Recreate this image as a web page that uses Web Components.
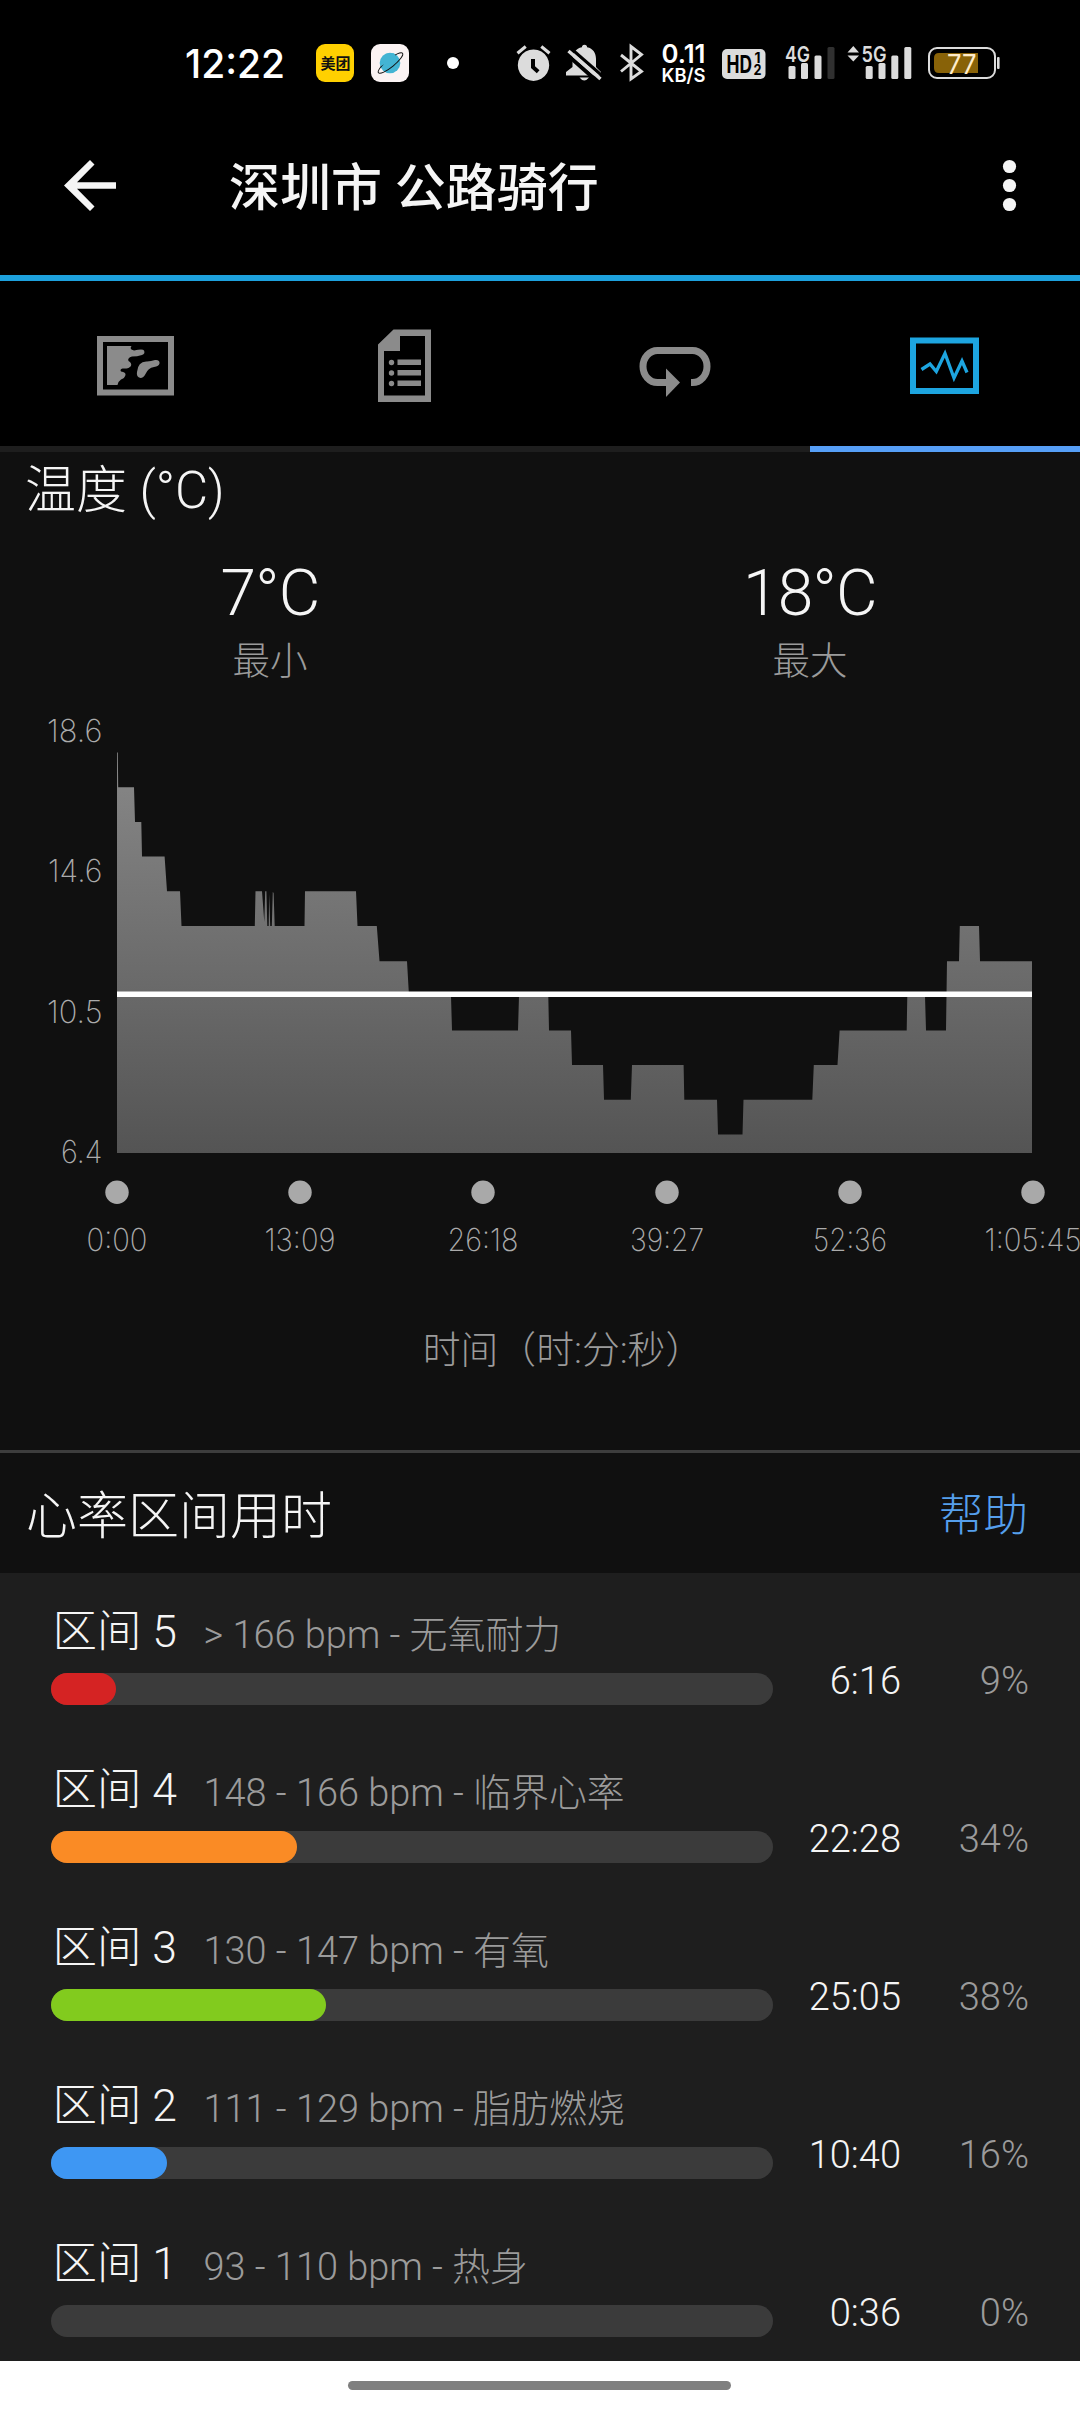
<!DOCTYPE html>
<html lang="zh-CN">
<head>
<meta charset="utf-8">
<title>深圳市 公路骑行</title>
<style>
html,body{margin:0;background:#101010}
body{width:1080px;height:2412px;overflow:hidden;font-family:Roboto,"Noto Sans CJK SC",sans-serif;font-weight:300;color:#f5f5f5}
</style>
</head>
<body>
<ride-screen></ride-screen>
<script>
const define=(name,html)=>customElements.define(name,class extends HTMLElement{
  connectedCallback(){
    if(this.shadowRoot)return;
    const t=document.createElement('template');
    t.innerHTML=typeof html==='function'?html(this):html;
    this.attachShadow({mode:'open'}).append(t.content.cloneNode(true));
  }
});

define('status-bar',`
<style>:host{display:block;height:120px;background:#000}svg{display:block}
text{font-family:Inter,"Noto Sans CJK SC",sans-serif}</style>
<svg width="1080" height="120" viewBox="0 0 1080 120" fill="#dcdcdc">
<text x="185" y="78" font-size="39" font-weight="500" fill="#fff" textLength="100">12:22</text>
<rect x="316" y="44" width="38" height="38" rx="9" fill="#ffd000"/>
<text x="320.500" y="69" font-size="15" font-weight="700" fill="#111" textLength="30">美团</text>
<rect x="371" y="44" width="38" height="38" rx="9" fill="#fbf3f3"/>
<circle cx="390" cy="63" r="10.300" fill="#43b4d3"/>
<ellipse cx="390.500" cy="63" rx="15.500" ry="4" transform="rotate(-39 390.500 63)" fill="none" stroke="#111" stroke-width="1"/>
<path d="M381 66A10.300 10.300 0 0 1 394 53.500L397 58Z" fill="#43b4d3"/>
<circle cx="453" cy="63" r="6" fill="#fff"/>
<path fill-rule="evenodd" d="M533.500 49.500a15.700 15.700 0 1 0 .01 0ZM531 59h4v7.200l4.500 4-2.700 3-5.800-5.200Z"/>
<path d="M516.500 52l8.200-6.700 2 2.500-8.200 6.700ZM550.500 52l-8.200-6.700-2 2.500 8.200 6.700Z"/>
<path d="M581.900 47.300A2.600 2.600 0 0 1 587.100 47.300c6 1 8.900 6 8.900 11.500V67l5 5v3.500H566V72l6.500-5v-8.200c0-5.500 3.500-10.500 9.400-11.500ZM579.500 77.500h9.500q-4.800 6-9.500 0Z"/>
<path d="M567 54.500L598 82" stroke="#000" stroke-width="4"/>
<path d="M571 48.500L603 76.500" stroke="#000" stroke-width="3"/>
<path d="M568.500 51L600.500 79" stroke="#dcdcdc" stroke-width="3.400"/>
<path d="M621 55L641.500 71.500L631 79V46.500L641.500 54.500L621 71.500" fill="none" stroke="#dcdcdc" stroke-width="2.900"/>
<text x="661.500" y="63" font-size="26" font-weight="600" fill="#fff" textLength="44" lengthAdjust="spacingAndGlyphs">0.11</text>
<text x="661.500" y="81.500" font-size="19" font-weight="600" fill="#fff" textLength="44" lengthAdjust="spacingAndGlyphs">KB/S</text>
<rect x="722" y="49" width="43.500" height="30" rx="5"/>
<g fill="#000"><text x="726.500" y="72.500" font-size="24" font-weight="700" textLength="25.500" lengthAdjust="spacingAndGlyphs">HD</text>
<text x="754.500" y="62.500" font-size="14" font-weight="700" textLength="6">1</text>
<text x="753.500" y="75" font-size="14" font-weight="700" textLength="8" lengthAdjust="spacingAndGlyphs">2</text></g>
<text x="785" y="61.500" font-size="22" font-weight="600" textLength="25" lengthAdjust="spacingAndGlyphs">4G</text>
<rect x="788.500" y="66" width="7" height="13" rx="1.500"/><rect x="801" y="63" width="7" height="16" rx="1.500"/><rect x="814.500" y="55.500" width="7" height="23.500" rx="1.500"/><rect x="827.500" y="47" width="7" height="32" rx="1.500" fill="#303030"/>
<path d="M847.500 52.500L853.300 46L859 52.500ZM847.500 55.500L853.300 61.500L859 55.500Z"/>
<text x="861.500" y="61.500" font-size="22" font-weight="600" textLength="25" lengthAdjust="spacingAndGlyphs">5G</text>
<rect x="865.700" y="66" width="7" height="13" rx="1.500"/><rect x="878.500" y="63" width="7" height="16" rx="1.500"/><rect x="891.300" y="55.500" width="7" height="23.500" rx="1.500"/><rect x="904.300" y="47" width="7" height="32" rx="1.500"/>
<rect x="929" y="48" width="66" height="30" rx="8" fill="none" stroke="#dcdcdc" stroke-width="2"/>
<rect x="997" y="57" width="2.600" height="12" rx="1"/>
<path d="M939 53H978V73H939Q934 73 934 68V58Q934 53 939 53Z" fill="#886208"/>
<text x="947" y="73.500" font-size="27.500" font-weight="400" fill="#ffeccb" textLength="29.500" lengthAdjust="spacingAndGlyphs">77</text>
</svg>`);

define('app-bar',`
<style>:host{display:flex;height:155px;border-bottom:6px solid #1da1dd;background:#000}
svg{display:block;flex:none}h1{flex:1;margin:0;font-size:51px;line-height:138px;font-weight:500;color:#f5f5f5}</style>
<svg width="229" height="130" viewBox="0 120 229 130"><path d="M64 185.500L90 160L94.500 164.500L77 182.300H116V188.700H77L94.500 206.500L90 211Z" fill="#f5f5f5"/></svg>
<h1><slot></slot></h1>
<svg width="142" height="130" viewBox="938 120 142 130" fill="#f5f5f5"><circle cx="1009.500" cy="166.500" r="6.600"/><circle cx="1009.500" cy="185.500" r="6.600"/><circle cx="1009.500" cy="204.500" r="6.600"/></svg>`);

define('tab-item',el=>`
<style>:host{display:block;height:165px;border-bottom:6px solid #1e1e1e;color:#8b8b8b}
:host([active]){border-color:#569ff7;color:#1da5e0}svg{display:block}</style>
<svg width="270" height="165" fill="currentColor" viewBox="${{map:'0 281 270 165',doc:'270 281 270 165',lap:'540 281 270 165',pulse:'810 281 270 165'}[el.getAttribute('icon')]}">
${{
map:`<rect x="100" y="339" width="71" height="53.500" fill="none" stroke="currentColor" stroke-width="6"/>
<path d="M107 346H131.500Q129 349.500 134 350.500Q143 348.500 144 350.500Q145.500 353.500 142 355Q137 356.500 132 356.500Q127 358 128.500 361Q132 363 131 366Q129 369 122.500 368.500Q119.500 369.500 121 371.500Q126 372 125.500 375Q124.500 378.500 121 379.500Q118.500 381 117.500 385H107Z"/>
<path d="M137 372Q138 361 147 361.500Q151 361 155 360Q160 359.500 159.500 363.500Q159 366 154 367Q148 368 145.500 374Q143.500 378 140.500 378Q136 377 137 372Z"/>`,
doc:`<path fill-rule="evenodd" d="M393.500 329.500H431V402H378V344.500ZM400 336V351H384V395.500H425V336Z"/>
<g><circle cx="391.500" cy="362.500" r="2.700"/><circle cx="391.500" cy="373" r="2.700"/><circle cx="391.500" cy="383.500" r="2.700"/><path d="M397.500 359.500h23.500v5.500h-23.500ZM397.500 370h23.500v5.500h-23.500ZM397.500 380.500h23.500v5.500h-23.500Z"/></g>`,
lap:`<path d="M667 382.500H657.500A14.500 16 0 0 1 657.500 350.500H692.500A14.500 16 0 0 1 692.500 382.500H691" fill="none" stroke="currentColor" stroke-width="7"/><path d="M666 368.500L680 382.500L666 397Z"/>`,
pulse:`<rect x="913" y="340.500" width="63" height="50.500" fill="none" stroke="currentColor" stroke-width="6"/><path d="M921.500 369.500L930 364L936.300 371.500L945 353.500L954 378L962 361L967 372.500" fill="none" stroke="currentColor" stroke-width="3.300" stroke-miterlimit="10"/>`
}[el.getAttribute('icon')]}</svg>`);

define('tab-strip',`<style>:host{display:grid;grid-template-columns:repeat(4,1fr);background:#000}</style><slot></slot>`);

define('stat-value',el=>`
<style>:host{display:flex;flex-direction:column;align-items:center;gap:0}
b{font-weight:300;font-size:64px;line-height:76px;letter-spacing:-.7px}span{font-size:37.500px;line-height:59px;color:#9b9b9b}</style>
<b><slot></slot></b><span>${el.getAttribute('label')}</span>`);

define('area-chart',()=>{
 const xs=[117,300,483,667,850,1033],ts=['0:00','13:09','26:18','39:27','52:36','1:05:45'],w=[61,71,71,74,74,97];
 return `<style>:host{display:block;height:628px}svg{display:block}text{font-family:Inter,sans-serif;font-weight:200;font-size:31.500px;fill:#ababab}</style>
<svg width="1080" height="628" viewBox="0 692 1080 628">
<defs><linearGradient id="g" gradientUnits="userSpaceOnUse" x1="0" y1="752" x2="0" y2="1153"><stop offset="0" stop-color="#888"/><stop offset="1" stop-color="#545454"/></linearGradient></defs>
<path fill="url(#g)" d="M117 1153V752.500H117.800L118.200 787.300H134L135 822H141.300L142 856.500H164.600L167 891.300H180L181.500 926H254.800L255.500 891.300H262L264.300 922L265.200 891.300H266.400L267.300 926H268.700L269.200 894L270.200 926H271.800L272.800 892L273.600 893L274.700 926H304.500L305 891.300H356L357.500 926H376.800L379.500 961.200H407L409 996H451L452 1030.500H518L519 996H548.300L549 1030.500H571L572 1065H603L604 1099.700H630.800L632 1065H683.600L684.300 1099.700H717L718 1134.500H742.500L743.500 1099.700H812.300L813.800 1065H837.500L839.600 1030.500H906.700L907.300 996H925L926 1030.500H946L947 961.200H959L959.800 926H979L980 961.200H1032V1153Z"/>
<rect x="117" y="991.500" width="915" height="5.500" fill="#fff"/>
${[['18.6',741.500,47],['14.6',882,48],['10.5',1022.500,47],['6.4',1163,61]].map(a=>`<text x="${a[2]}" y="${a[1]}" textLength="${102.500-a[2]}" lengthAdjust="spacingAndGlyphs">${a[0]}</text>`).join('')}
${xs.map((x,i)=>`<circle cx="${x}" cy="1192.300" r="11.700" fill="#a9a9a9"/><text x="${x-w[i]/2}" y="1250.500" textLength="${w[i]}" lengthAdjust="spacingAndGlyphs">${ts[i]}</text>`).join('')}
</svg>`});

define('chart-card',`
<style>:host{display:block;height:998px;border-bottom:3px solid #3d3d3d}
h2{margin:0 0 26px 25px;font-size:51px;font-weight:300;line-height:78px}
.stats{display:grid;grid-template-columns:1fr 1fr;height:136px}
p{margin:0 0 0 46px;text-align:center;font-size:37.800px;line-height:60px;color:#9b9b9b}</style>
<h2>温度 (°C)</h2>
<div class="stats"><stat-value label="最小">7°C</stat-value><stat-value label="最大">18°C</stat-value></div>
<area-chart></area-chart>
<p>时间（时:分:秒）</p>`);

define('section-head',`
<style>:host{display:flex;justify-content:space-between;align-items:center;height:120px;box-sizing:border-box;padding:7px 52px 0 26px}
h2{margin:0;font-size:51px;font-weight:300;line-height:70px}a{font-size:44.500px;line-height:68px;margin-bottom:2px;color:#559fec}</style>
<h2><slot></slot></h2><a>帮助</a>`);

define('zone-row',el=>{const a=n=>el.getAttribute(n);return `
<style>:host{display:flex;height:158px;padding-left:51px}
.main{width:722px;padding-top:29px}.t{display:flex;height:60px;padding-left:1.500px;white-space:pre;line-height:61px}
b{width:151px;font-weight:300;font-size:44.500px}i{font-style:normal;font-size:37.900px;padding-top:3px;color:#9b9b9b}
.track{height:32px;margin-top:11px;border-radius:16px;background:#3b3b3b}
.fill{height:32px;border-radius:16px;background:${a('color')};width:${a('width')}px}
span{line-height:60px;padding-top:78px;text-align:right;font-size:38px;width:128px}.p{width:128px;color:#9b9b9b}</style>
<div class="main"><div class="t"><b><slot></slot></b><i>${a('range')}</i></div><div class="track"><div class="fill"></div></div></div>
<span>${a('time')}</span><span class="p">${a('pct')}</span>`});

define('zone-list',`<style>:host{display:block;height:788px;overflow:hidden;background:#1e1e1e}</style><slot></slot>`);
define('nav-pill',`<style>:host{display:flex;justify-content:center;height:51px;background:#fff;padding-right:2px}div{width:383px;height:9px;margin-top:20px;border-radius:5px;background:#7f7f7f}</style><div></div>`);

define('ride-screen',`
<style>:host{display:block;width:1080px}</style>
<status-bar></status-bar>
<app-bar>深圳市 公路骑行</app-bar>
<tab-strip><tab-item icon="map"></tab-item><tab-item icon="doc"></tab-item><tab-item icon="lap"></tab-item><tab-item icon="pulse" active></tab-item></tab-strip>
<chart-card></chart-card>
<section-head>心率区间用时</section-head>
<zone-list>
<zone-row range="&gt; 166 bpm - 无氧耐力" color="#d52323" width="65" time="6:16" pct="9%">区间 5</zone-row>
<zone-row range="148 - 166 bpm - 临界心率" color="#fa8b25" width="246" time="22:28" pct="34%">区间 4</zone-row>
<zone-row range="130 - 147 bpm - 有氧" color="#82cb1e" width="275" time="25:05" pct="38%">区间 3</zone-row>
<zone-row range="111 - 129 bpm - 脂肪燃烧" color="#3e97f3" width="116" time="10:40" pct="16%">区间 2</zone-row>
<zone-row range="93 - 110 bpm - 热身" color="#9b9b9b" width="0" time="0:36" pct="0%">区间 1</zone-row>
</zone-list>
<nav-pill></nav-pill>`);
</script>
</body>
</html>
